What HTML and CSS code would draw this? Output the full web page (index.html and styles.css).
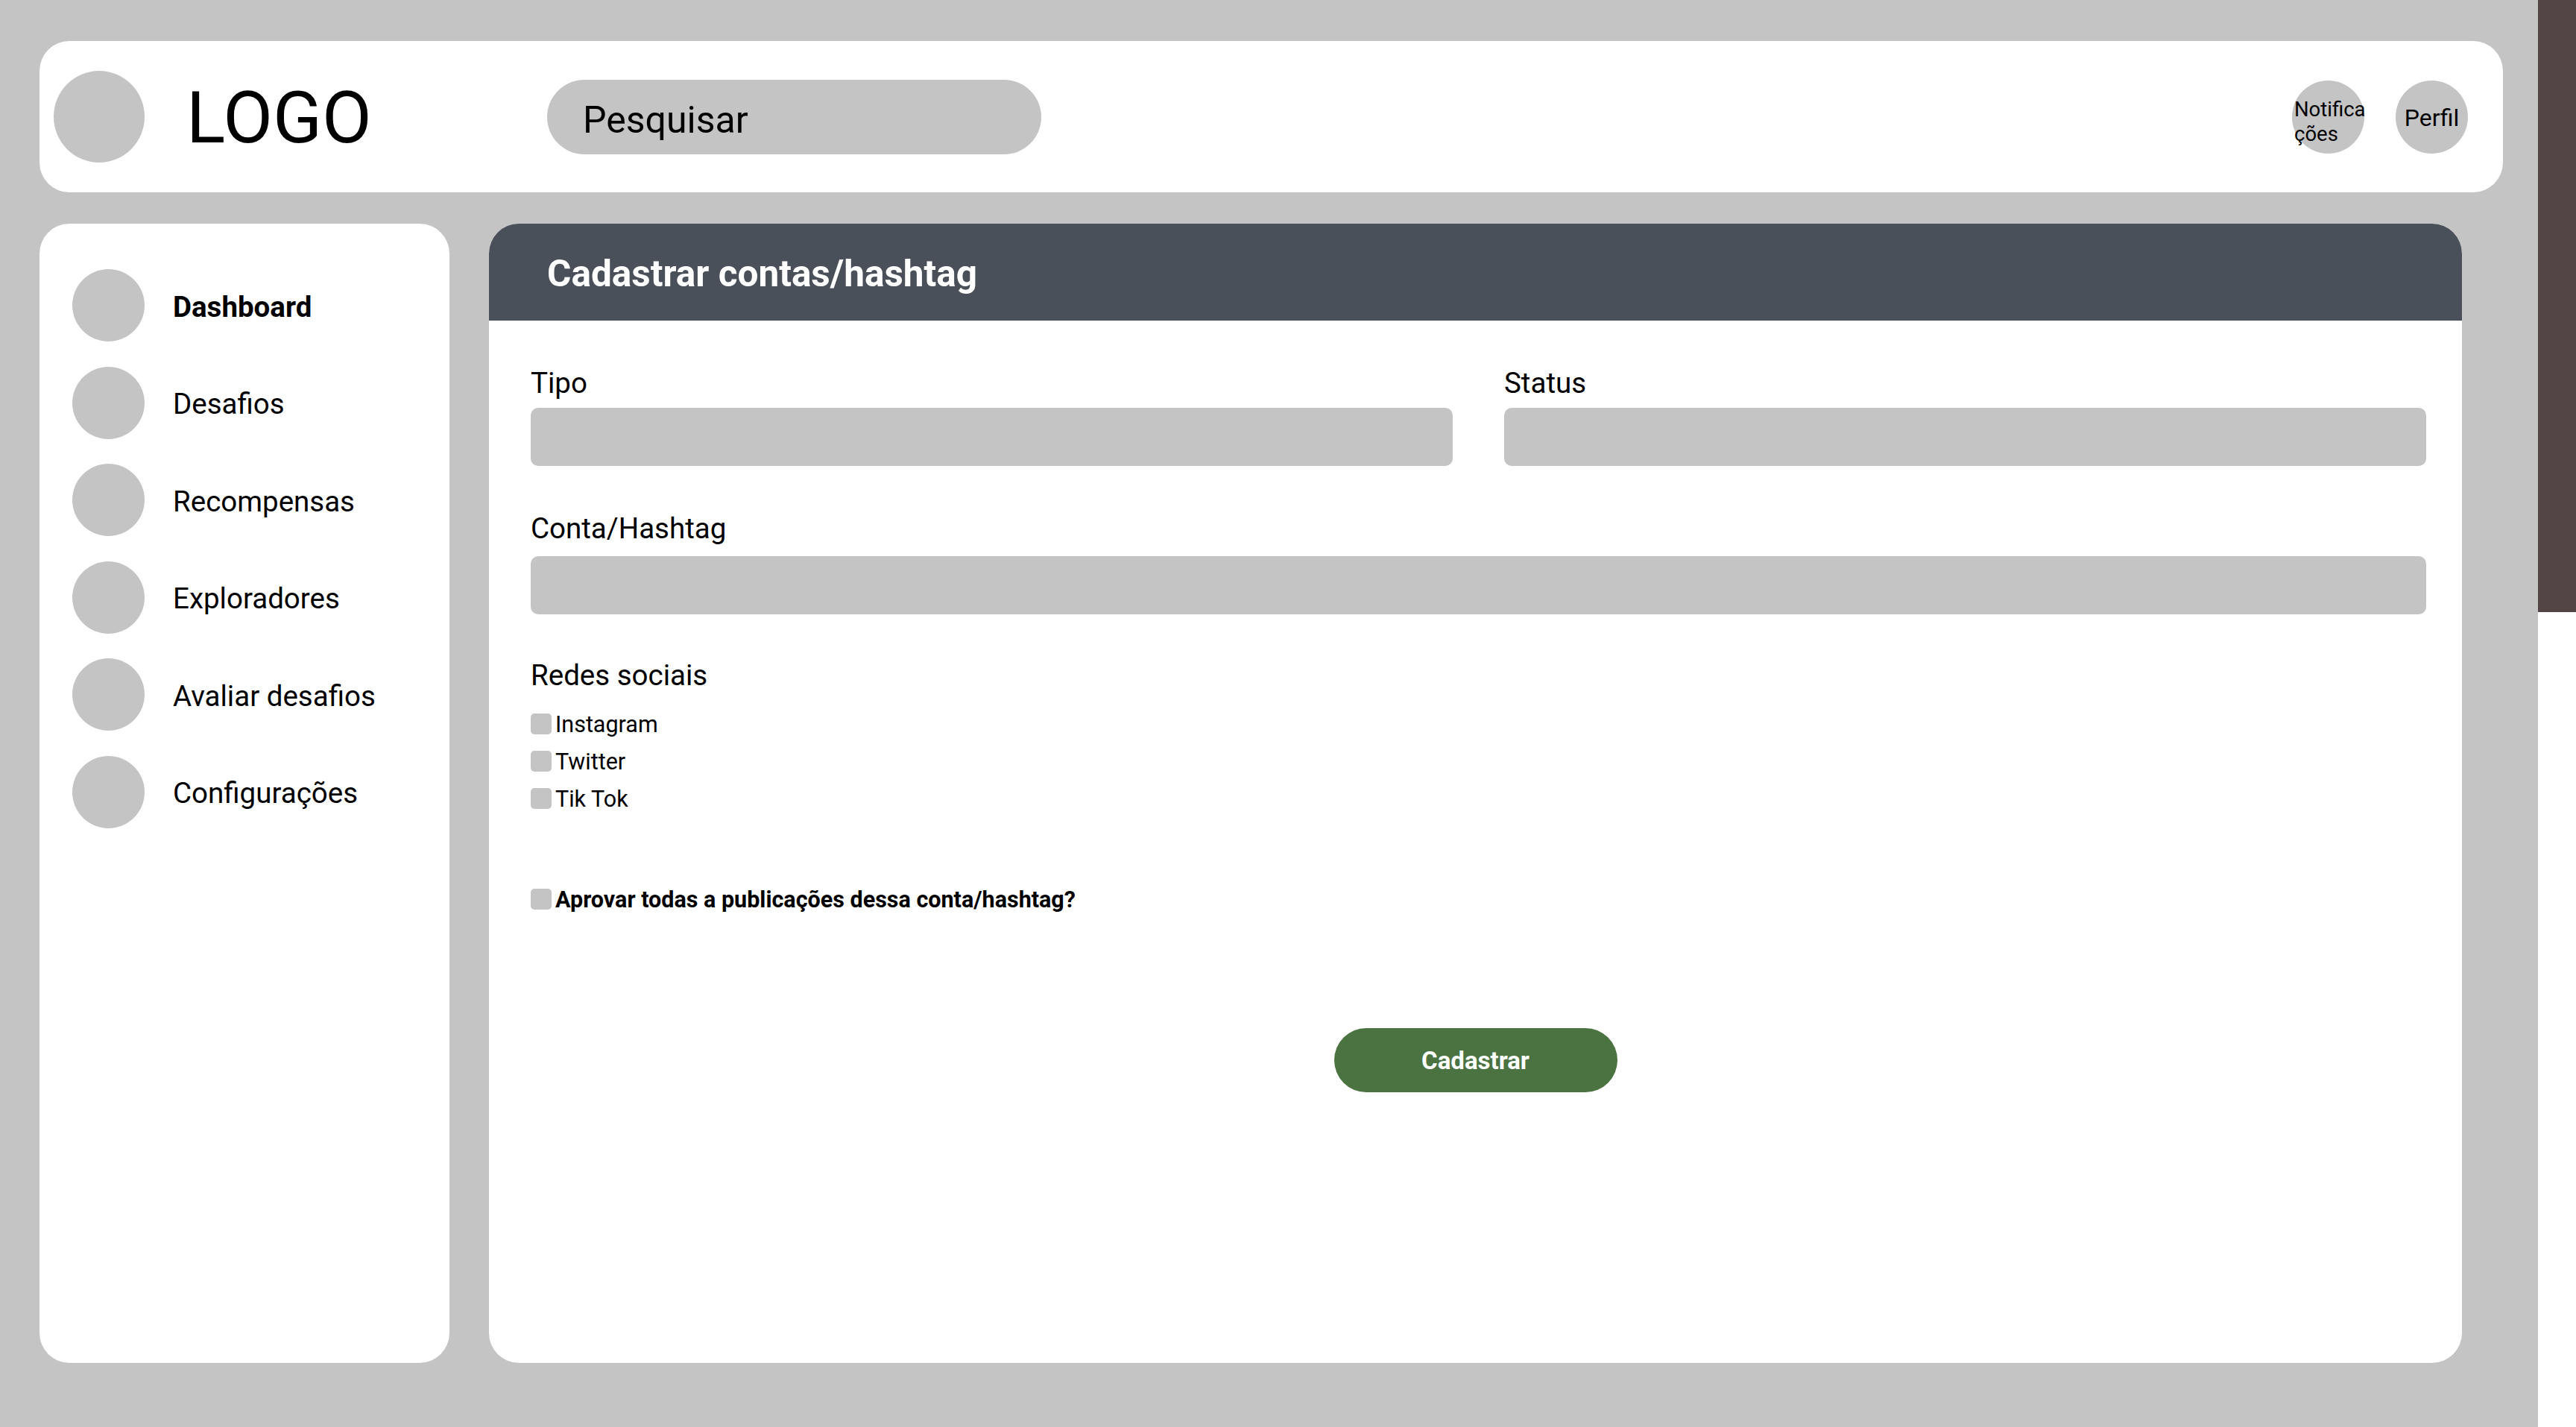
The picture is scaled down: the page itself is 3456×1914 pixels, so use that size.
FILE: index.html
```html
<!DOCTYPE html>
<html lang="pt-BR">
<head>
<meta charset="utf-8">
<title>Cadastrar contas/hashtag</title>
<link rel="stylesheet" href="styles.css">
</head>
<body>
<div class="page">
  <header class="topbar">
    <div class="brand">
      <div class="logo-circle"></div>
      <div class="logo-text">LOGO</div>
    </div>
    <div class="search">Pesquisar</div>
    <div class="top-actions">
      <div class="round-btn notif"><span class="notif-text">Notificações</span></div>
      <div class="round-btn perfil"><span>Perfil</span></div>
    </div>
  </header>

  <div class="content">
    <nav class="sidebar">
      <div class="nav-item active"><span class="nav-icon"></span><span class="nav-label">Dashboard</span></div>
      <div class="nav-item"><span class="nav-icon"></span><span class="nav-label">Desafios</span></div>
      <div class="nav-item"><span class="nav-icon"></span><span class="nav-label">Recompensas</span></div>
      <div class="nav-item"><span class="nav-icon"></span><span class="nav-label">Exploradores</span></div>
      <div class="nav-item"><span class="nav-icon"></span><span class="nav-label">Avaliar desafios</span></div>
      <div class="nav-item"><span class="nav-icon"></span><span class="nav-label">Configurações</span></div>
    </nav>

    <main class="panel">
      <div class="panel-header"><h1 class="panel-title">Cadastrar contas/hashtag</h1></div>
      <div class="form">
        <div class="row-two">
          <div class="field">
            <label class="field-label">Tipo</label>
            <div class="input"></div>
          </div>
          <div class="field">
            <label class="field-label">Status</label>
            <div class="input"></div>
          </div>
        </div>
        <div class="field field-wide">
          <label class="field-label">Conta/Hashtag</label>
          <div class="input"></div>
        </div>
        <div class="social">
          <div class="field-label">Redes sociais</div>
          <div class="check-list">
            <div class="check-row"><span class="checkbox"></span><span>Instagram</span></div>
            <div class="check-row"><span class="checkbox"></span><span>Twitter</span></div>
            <div class="check-row"><span class="checkbox"></span><span>Tik Tok</span></div>
          </div>
        </div>
        <div class="check-row approve"><span class="checkbox"></span><span>Aprovar todas a publicações dessa conta/hashtag?</span></div>
        <div class="actions">
          <button class="submit" type="button">Cadastrar</button>
        </div>
      </div>
    </main>
  </div>
</div>
<div class="scrollbar"><div class="scroll-thumb"></div></div>
</body>
</html>
```

FILE: styles.css
```css
* { box-sizing: border-box; }

html, body {
  margin: 0;
  padding: 0;
}

body {
  width: 3456px;
  height: 1914px;
  overflow: hidden;
  display: flex;
  background: #c4c4c4;
  font-family: Roboto, "Noto Sans", "Liberation Sans", sans-serif;
  color: #000;
}

.page {
  width: 3405px;
  flex: none;
  padding: 55px 0 0 53px;
  display: flex;
  flex-direction: column;
  gap: 42px;
}

/* Top bar */
.topbar {
  width: 3305px;
  height: 203px;
  background: #fff;
  border-radius: 40px;
  display: flex;
  align-items: center;
  padding: 0 47px 0 19px;
}

.brand {
  width: 662px;
  display: flex;
  align-items: center;
  gap: 56px;
}

.logo-circle {
  width: 122px;
  height: 123px;
  border-radius: 50%;
  background: #c4c4c4;
  flex: none;
}

.logo-text {
  font-size: 97px;
  line-height: 1;
  font-weight: 400;
  padding-top: 4px;
}

.search {
  width: 663px;
  height: 100px;
  border-radius: 50px;
  background: #c4c4c4;
  display: flex;
  align-items: center;
  padding: 9px 0 0 48px;
  font-size: 50px;
}

.top-actions {
  margin-left: auto;
  display: flex;
  gap: 42px;
}

.round-btn {
  width: 97px;
  height: 98px;
  border-radius: 50%;
  background: #c4c4c4;
  display: flex;
  align-items: center;
  justify-content: center;
}

.notif {
  justify-content: flex-start;
  padding: 12px 0 0 3px;
}

.notif-text {
  width: 100px;
  flex: none;
  font-size: 27.5px;
  line-height: 33px;
  word-break: break-all;
}

.perfil {
  font-size: 32px;
  padding-top: 2px;
}

/* Content row */
.content {
  display: flex;
  gap: 53px;
  height: 1528px;
}

.sidebar {
  width: 550px;
  background: #fff;
  border-radius: 40px;
  padding: 61px 0 0 44px;
  display: flex;
  flex-direction: column;
  gap: 33.5px;
}

.nav-item {
  display: flex;
  align-items: center;
  gap: 38px;
  font-size: 38.5px;
}

.nav-label {
  padding-top: 3px;
}

.nav-icon {
  width: 97px;
  height: 97px;
  border-radius: 50%;
  background: #c4c4c4;
  flex: none;
}

.nav-item.active .nav-label {
  font-weight: 700;
}

/* Main panel */
.panel {
  width: 2647px;
  background: #fff;
  border-radius: 40px;
  overflow: hidden;
}

.panel-header {
  height: 130px;
  background: #4a5059;
  display: flex;
  align-items: center;
  padding: 3px 0 0 78px;
}

.panel-title {
  margin: 0;
  color: #fff;
  font-size: 49.5px;
  font-weight: 700;
}

.form {
  padding: 63px 48px 0 56px;
  display: flex;
  flex-direction: column;
}

.row-two {
  display: grid;
  grid-template-columns: 1fr 1fr;
  gap: 69px;
}

.field {
  display: flex;
  flex-direction: column;
  gap: 12px;
}

.field-wide {
  margin-top: 63px;
  gap: 16px;
}

.field-label {
  font-size: 38.5px;
  line-height: 42px;
}

.input {
  height: 78px;
  border-radius: 10px;
  background: #c4c4c4;
}

.social {
  margin-top: 61px;
}

.check-list {
  margin-top: 27px;
  display: flex;
  flex-direction: column;
  gap: 16px;
}

.check-row {
  height: 34px;
  display: flex;
  align-items: center;
  gap: 5px;
  font-size: 30.5px;
}

.checkbox {
  width: 28px;
  height: 28px;
  border-radius: 5px;
  background: #c4c4c4;
  flex: none;
}

.approve {
  margin-top: 101px;
  font-weight: 700;
}

.actions {
  margin-top: 156px;
  display: flex;
  justify-content: center;
}

.submit {
  width: 380px;
  height: 86px;
  border: none;
  border-radius: 43px;
  background: #4a7341;
  color: #fff;
  font-family: Roboto, "Noto Sans", "Liberation Sans", sans-serif;
  font-size: 33px;
  font-weight: 700;
  padding: 0;
  margin-left: -8px;
}

/* Fake window scrollbar */
.scrollbar {
  width: 51px;
  height: 1914px;
  background: #fff;
  flex: none;
}

.scroll-thumb {
  height: 821px;
  background: #534545;
}
```
